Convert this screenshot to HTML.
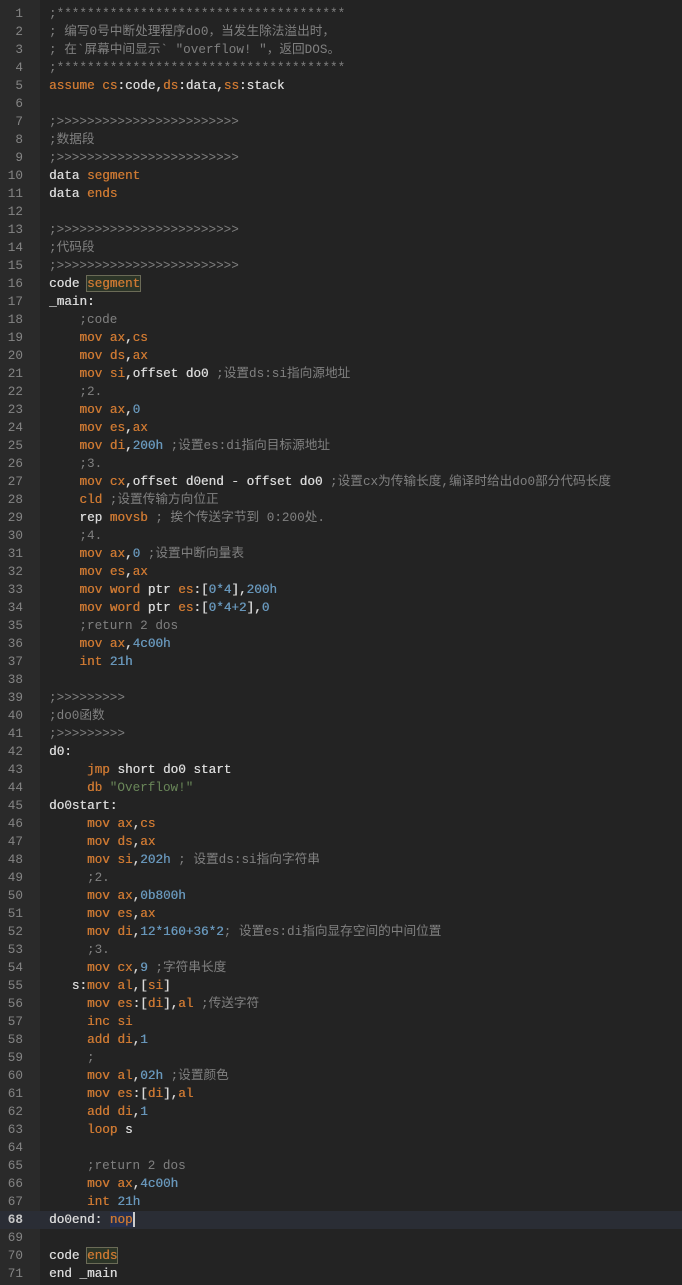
<!DOCTYPE html>
<html><head><meta charset="utf-8"><style>
html,body{margin:0;padding:0;width:682px;height:1285px;overflow:hidden;background:#232323;}
#g{position:absolute;left:0;top:0;width:40px;height:1285px;background:#2a2a2a;}
#c{position:absolute;left:0;top:5px;width:682px;}
.l{height:18px;line-height:18px;position:relative;white-space:pre;font-family:"Liberation Mono","Noto Sans CJK SC",monospace;font-size:12.67px;color:#d8d8d8;font-weight:normal;}
.t{text-shadow:0.35px 0 0 currentColor;}
.n{position:absolute;left:0;width:23px;text-align:right;color:#858585;font-weight:normal;}
.t{position:absolute;left:49px;}
.k{color:#cc7832}.b{color:#6897bb}.c{color:#808080;text-shadow:none}.s{color:#6a8759;text-shadow:none}
.bx{outline:1px solid #6b6b57;background:#2c3527;}
.hl{background:#2a2d35;}
.nop{background:#263050;border-right:2px solid #ccc;}
</style></head><body><div id="g"></div><div id="c">
<div class="l"><span class="n">1</span><span class="t c">;**************************************</span></div>
<div class="l"><span class="n">2</span><span class="t c">; 编写0号中断处理程序do0，当发生除法溢出时，</span></div>
<div class="l"><span class="n">3</span><span class="t c">; 在`屏幕中间显示` "overflow! "，返回DOS。</span></div>
<div class="l"><span class="n">4</span><span class="t c">;**************************************</span></div>
<div class="l"><span class="n">5</span><span class="t"><span class="k">assume</span> <span class="k">cs</span>:code,<span class="k">ds</span>:data,<span class="k">ss</span>:stack</span></div>
<div class="l"><span class="n">6</span></div>
<div class="l"><span class="n">7</span><span class="t c">;&gt;&gt;&gt;&gt;&gt;&gt;&gt;&gt;&gt;&gt;&gt;&gt;&gt;&gt;&gt;&gt;&gt;&gt;&gt;&gt;&gt;&gt;&gt;&gt;</span></div>
<div class="l"><span class="n">8</span><span class="t c">;数据段</span></div>
<div class="l"><span class="n">9</span><span class="t c">;&gt;&gt;&gt;&gt;&gt;&gt;&gt;&gt;&gt;&gt;&gt;&gt;&gt;&gt;&gt;&gt;&gt;&gt;&gt;&gt;&gt;&gt;&gt;&gt;</span></div>
<div class="l"><span class="n">10</span><span class="t">data <span class="k">segment</span></span></div>
<div class="l"><span class="n">11</span><span class="t">data <span class="k">ends</span></span></div>
<div class="l"><span class="n">12</span></div>
<div class="l"><span class="n">13</span><span class="t c">;&gt;&gt;&gt;&gt;&gt;&gt;&gt;&gt;&gt;&gt;&gt;&gt;&gt;&gt;&gt;&gt;&gt;&gt;&gt;&gt;&gt;&gt;&gt;&gt;</span></div>
<div class="l"><span class="n">14</span><span class="t c">;代码段</span></div>
<div class="l"><span class="n">15</span><span class="t c">;&gt;&gt;&gt;&gt;&gt;&gt;&gt;&gt;&gt;&gt;&gt;&gt;&gt;&gt;&gt;&gt;&gt;&gt;&gt;&gt;&gt;&gt;&gt;&gt;</span></div>
<div class="l"><span class="n">16</span><span class="t">code <span class="k bx">segment</span></span></div>
<div class="l"><span class="n">17</span><span class="t">_main:</span></div>
<div class="l"><span class="n">18</span><span class="t">    <span class="c">;code</span></span></div>
<div class="l"><span class="n">19</span><span class="t">    <span class="k">mov ax</span>,<span class="k">cs</span></span></div>
<div class="l"><span class="n">20</span><span class="t">    <span class="k">mov ds</span>,<span class="k">ax</span></span></div>
<div class="l"><span class="n">21</span><span class="t">    <span class="k">mov si</span>,offset do0 <span class="c">;设置ds:si指向源地址</span></span></div>
<div class="l"><span class="n">22</span><span class="t">    <span class="c">;2.</span></span></div>
<div class="l"><span class="n">23</span><span class="t">    <span class="k">mov ax</span>,<span class="b">0</span></span></div>
<div class="l"><span class="n">24</span><span class="t">    <span class="k">mov es</span>,<span class="k">ax</span></span></div>
<div class="l"><span class="n">25</span><span class="t">    <span class="k">mov di</span>,<span class="b">200h</span> <span class="c">;设置es:di指向目标源地址</span></span></div>
<div class="l"><span class="n">26</span><span class="t">    <span class="c">;3.</span></span></div>
<div class="l"><span class="n">27</span><span class="t">    <span class="k">mov cx</span>,offset d0end - offset do0 <span class="c">;设置cx为传输长度,编译时给出do0部分代码长度</span></span></div>
<div class="l"><span class="n">28</span><span class="t">    <span class="k">cld</span> <span class="c">;设置传输方向位正</span></span></div>
<div class="l"><span class="n">29</span><span class="t">    rep <span class="k">movsb</span> <span class="c">; 挨个传送字节到 0:200处.</span></span></div>
<div class="l"><span class="n">30</span><span class="t">    <span class="c">;4.</span></span></div>
<div class="l"><span class="n">31</span><span class="t">    <span class="k">mov ax</span>,<span class="b">0</span> <span class="c">;设置中断向量表</span></span></div>
<div class="l"><span class="n">32</span><span class="t">    <span class="k">mov es</span>,<span class="k">ax</span></span></div>
<div class="l"><span class="n">33</span><span class="t">    <span class="k">mov word</span> ptr <span class="k">es</span>:[<span class="b">0*4</span>],<span class="b">200h</span></span></div>
<div class="l"><span class="n">34</span><span class="t">    <span class="k">mov word</span> ptr <span class="k">es</span>:[<span class="b">0*4+2</span>],<span class="b">0</span></span></div>
<div class="l"><span class="n">35</span><span class="t">    <span class="c">;return 2 dos</span></span></div>
<div class="l"><span class="n">36</span><span class="t">    <span class="k">mov ax</span>,<span class="b">4c00h</span></span></div>
<div class="l"><span class="n">37</span><span class="t">    <span class="k">int</span> <span class="b">21h</span></span></div>
<div class="l"><span class="n">38</span></div>
<div class="l"><span class="n">39</span><span class="t c">;&gt;&gt;&gt;&gt;&gt;&gt;&gt;&gt;&gt;</span></div>
<div class="l"><span class="n">40</span><span class="t c">;do0函数</span></div>
<div class="l"><span class="n">41</span><span class="t c">;&gt;&gt;&gt;&gt;&gt;&gt;&gt;&gt;&gt;</span></div>
<div class="l"><span class="n">42</span><span class="t">d0:</span></div>
<div class="l"><span class="n">43</span><span class="t">     <span class="k">jmp</span> short do0 start</span></div>
<div class="l"><span class="n">44</span><span class="t">     <span class="k">db</span> <span class="s">"Overflow!"</span></span></div>
<div class="l"><span class="n">45</span><span class="t">do0start:</span></div>
<div class="l"><span class="n">46</span><span class="t">     <span class="k">mov ax</span>,<span class="k">cs</span></span></div>
<div class="l"><span class="n">47</span><span class="t">     <span class="k">mov ds</span>,<span class="k">ax</span></span></div>
<div class="l"><span class="n">48</span><span class="t">     <span class="k">mov si</span>,<span class="b">202h</span> <span class="c">; 设置ds:si指向字符串</span></span></div>
<div class="l"><span class="n">49</span><span class="t">     <span class="c">;2.</span></span></div>
<div class="l"><span class="n">50</span><span class="t">     <span class="k">mov ax</span>,<span class="b">0b800h</span></span></div>
<div class="l"><span class="n">51</span><span class="t">     <span class="k">mov es</span>,<span class="k">ax</span></span></div>
<div class="l"><span class="n">52</span><span class="t">     <span class="k">mov di</span>,<span class="b">12*160+36*2</span><span class="c">; 设置es:di指向显存空间的中间位置</span></span></div>
<div class="l"><span class="n">53</span><span class="t">     <span class="c">;3.</span></span></div>
<div class="l"><span class="n">54</span><span class="t">     <span class="k">mov cx</span>,<span class="b">9</span> <span class="c">;字符串长度</span></span></div>
<div class="l"><span class="n">55</span><span class="t">   s:<span class="k">mov al</span>,[<span class="k">si</span>]</span></div>
<div class="l"><span class="n">56</span><span class="t">     <span class="k">mov es</span>:[<span class="k">di</span>],<span class="k">al</span> <span class="c">;传送字符</span></span></div>
<div class="l"><span class="n">57</span><span class="t">     <span class="k">inc si</span></span></div>
<div class="l"><span class="n">58</span><span class="t">     <span class="k">add di</span>,<span class="b">1</span></span></div>
<div class="l"><span class="n">59</span><span class="t">     <span class="c">;</span></span></div>
<div class="l"><span class="n">60</span><span class="t">     <span class="k">mov al</span>,<span class="b">02h</span> <span class="c">;设置颜色</span></span></div>
<div class="l"><span class="n">61</span><span class="t">     <span class="k">mov es</span>:[<span class="k">di</span>],<span class="k">al</span></span></div>
<div class="l"><span class="n">62</span><span class="t">     <span class="k">add di</span>,<span class="b">1</span></span></div>
<div class="l"><span class="n">63</span><span class="t">     <span class="k">loop</span> s</span></div>
<div class="l"><span class="n">64</span></div>
<div class="l"><span class="n">65</span><span class="t">     <span class="c">;return 2 dos</span></span></div>
<div class="l"><span class="n">66</span><span class="t">     <span class="k">mov ax</span>,<span class="b">4c00h</span></span></div>
<div class="l"><span class="n">67</span><span class="t">     <span class="k">int</span> <span class="b">21h</span></span></div>
<div class="l hl"><span class="n" style="color:#c8c8c8;font-weight:bold">68</span><span class="t">do0end: <span class="k nop">nop</span></span></div>
<div class="l"><span class="n">69</span></div>
<div class="l"><span class="n">70</span><span class="t">code <span class="k bx">ends</span></span></div>
<div class="l"><span class="n">71</span><span class="t">end _main</span></div>
</div></body></html>
